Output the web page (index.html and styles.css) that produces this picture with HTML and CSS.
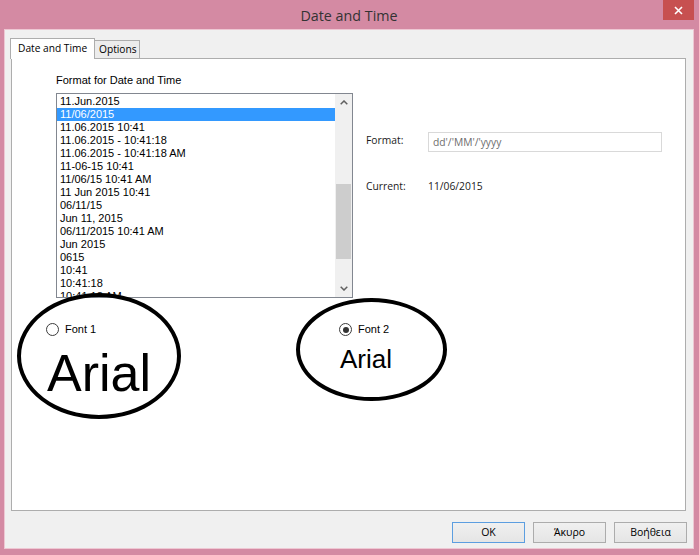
FILE: index.html
```html
<!DOCTYPE html>
<html lang="en">
<head>
<meta charset="utf-8">
<title>Date and Time</title>
<link rel="stylesheet" href="styles.css">
</head>
<body>
<div class="window">
  <div class="titlebar">
    <div class="title">Date and Time</div>
    <div class="close">
      <svg width="9" height="9" viewBox="0 0 9 9"><path d="M1 1L8 8M8 1L1 8" stroke="#fff" stroke-width="1.6" fill="none"/></svg>
    </div>
  </div>
  <div class="client">
    <div class="tabs">
      <div class="tab active">Date and Time</div>
      <div class="tab">Options</div>
    </div>
    <div class="panel">
      <div class="top">
        <div class="left">
          <div class="section-label">Format for Date and Time</div>
          <div class="listbox">
            <div class="items">
              <div class="item">11.Jun.2015</div>
              <div class="item selected">11/06/2015</div>
              <div class="item">11.06.2015 10:41</div>
              <div class="item">11.06.2015 - 10:41:18</div>
              <div class="item">11.06.2015 - 10:41:18 AM</div>
              <div class="item">11-06-15 10:41</div>
              <div class="item">11/06/15 10:41 AM</div>
              <div class="item">11 Jun 2015 10:41</div>
              <div class="item">06/11/15</div>
              <div class="item">Jun 11, 2015</div>
              <div class="item">06/11/2015 10:41 AM</div>
              <div class="item">Jun 2015</div>
              <div class="item">0615</div>
              <div class="item">10:41</div>
              <div class="item">10:41:18</div>
              <div class="item">10:41:18 AM</div>
            </div>
            <div class="scrollbar">
              <div class="sb-btn"><svg width="8" height="5" viewBox="0 0 8 5"><polyline points="0.7,4.3 4,1 7.3,4.3" fill="none" stroke="#606060" stroke-width="1.5"/></svg></div>
              <div class="sb-track"><div class="sb-thumb"></div></div>
              <div class="sb-btn"><svg width="8" height="5" viewBox="0 0 8 5"><polyline points="0.7,0.7 4,4 7.3,0.7" fill="none" stroke="#606060" stroke-width="1.5"/></svg></div>
            </div>
          </div>
        </div>
        <div class="details">
          <div class="field">
            <span class="flabel">Format:</span>
            <div class="input">dd'/'MM'/'yyyy</div>
          </div>
          <div class="field current">
            <span class="flabel">Current:</span>
            <span class="value">11/06/2015</span>
          </div>
        </div>
      </div>
      <div class="fonts">
        <div class="font-group g1">
          <div class="radio-row"><span class="radio"></span><span>Font 1</span></div>
          <div class="sample big">Arial</div>
        </div>
        <div class="font-group g2">
          <div class="radio-row"><span class="radio checked"></span><span>Font 2</span></div>
          <div class="sample small">Arial</div>
        </div>
      </div>
      <div class="ring ring1"></div>
      <div class="ring ring2"></div>
    </div>
    <div class="buttons">
      <button class="btn default">OK</button>
      <button class="btn">Άκυρο</button>
      <button class="btn">Βοήθεια</button>
    </div>
  </div>
</div>
</body>
</html>
```
FILE: styles.css
```css
* { box-sizing: border-box; }
html, body { margin: 0; padding: 0; }
body {
  width: 699px;
  height: 555px;
  overflow: hidden;
  background: #d48aa3;
  font-family: "Liberation Sans", Arial, sans-serif;
}
.window {
  width: 699px;
  height: 555px;
  padding: 0 5px 6px 4px;
  display: flex;
  flex-direction: column;
  background: #d48aa3;
}
.titlebar {
  height: 29px;
  flex: none;
  display: grid;
  grid-template-columns: 1fr auto 1fr;
  align-items: start;
}
.title {
  grid-column: 2;
  font-family: "Open Sans", "Noto Sans", sans-serif;
  font-size: 14.3px;
  color: #333;
  line-height: 29px;
  padding-top: 1px;
}
.close {
  grid-column: 3;
  justify-self: end;
  width: 31px;
  height: 20px;
  background: #c75050;
  display: flex;
  align-items: center;
  justify-content: center;
}
.close svg { display: block; }
.client {
  flex: 1;
  background: #f0f0f0;
  border: 1px solid #eec7d3;
  padding: 8px 7px 0 6px;
  display: flex;
  flex-direction: column;
}
.tabs {
  height: 20px;
  display: flex;
  align-items: flex-end;
  font-family: "Open Sans", "Noto Sans", sans-serif;
  font-size: 10.2px;
  color: #000;
}
.tab {
  height: 18px;
  width: 45px;
  border: 1px solid #adadad;
  border-left: none;
  border-bottom: none;
  background: #ececec;
  padding-left: 4px;
  line-height: 17px;
}
.tab.active {
  width: 85px;
  height: 21px;
  margin-left: -1px;
  margin-bottom: -1px;
  border-left: 1px solid #adadad;
  background: #fff;
  padding-left: 7px;
  line-height: 18px;
  position: relative;
  z-index: 1;
}
.panel {
  position: relative;
  width: 675px;
  height: 453px;
  flex: none;
  border: 1px solid #adadad;
  background: #fff;
  padding-top: 15px;
}
.top {
  display: flex;
  margin-left: 44px;
}
.section-label {
  font-size: 11px;
  line-height: 13px;
  color: #000;
}
.listbox {
  margin-top: 6px;
  width: 297px;
  height: 205px;
  border: 1px solid #828790;
  display: flex;
  overflow: hidden;
}
.items {
  flex: 1;
  padding-top: 1px;
  overflow: hidden;
}
.item {
  font-size: 11px;
  line-height: 13px;
  height: 13px;
  padding-left: 3px;
  color: #000;
  white-space: nowrap;
}
.item.selected {
  background: #3399ff;
  color: #fff;
}
.scrollbar {
  width: 17px;
  background: #f0f0f0;
  display: flex;
  flex-direction: column;
}
.sb-btn {
  height: 17px;
  display: flex;
  align-items: center;
  justify-content: center;
}
.sb-btn svg { display: block; }
.sb-track {
  flex: 1;
  padding-top: 73px;
}
.sb-thumb {
  height: 75px;
  margin: 0 1px;
  background: #cdcdcd;
}
.details {
  margin-left: 13px;
  padding-top: 58px;
  font-family: "Open Sans", "Noto Sans", sans-serif;
  font-size: 10.3px;
  color: #1a1a1a;
}
.field {
  display: flex;
  align-items: flex-start;
}
.flabel {
  width: 62px;
  line-height: 16px;
}
.input {
  width: 234px;
  height: 20px;
  border: 1px solid #d9d9d9;
  padding-left: 4px;
  line-height: 18px;
  color: #6d6d6d;
}
.field.current {
  margin-top: 26px;
}
.value { line-height: 16px; }
.fonts {
  display: flex;
  margin-top: 25px;
  padding-left: 34px;
}
.font-group.g1 { width: 293px; }
.radio-row {
  display: flex;
  align-items: center;
  gap: 6px;
  font-size: 11px;
  line-height: 13px;
  color: #000;
}
.radio {
  width: 13px;
  height: 13px;
  border: 1px solid #3c3c3c;
  border-radius: 50%;
  background: #fff;
  display: flex;
  align-items: center;
  justify-content: center;
}
.radio.checked::after {
  content: "";
  width: 6px;
  height: 6px;
  border-radius: 50%;
  background: #333;
}
.sample {
  font-family: "Liberation Sans", Arial, sans-serif;
  color: #000;
}
.sample.big {
  font-size: 52px;
  line-height: 52px;
  margin-top: 11px;
  margin-left: 1px;
}
.sample.small {
  font-size: 26px;
  line-height: 26px;
  margin-top: 10px;
  margin-left: 1px;
}
.ring {
  position: absolute;
  border: 4.5px solid #000;
  border-radius: 50%;
  pointer-events: none;
}
.ring1 { left: 5px; top: 234px; width: 164px; height: 126px; }
.ring2 { left: 284px; top: 239px; width: 151px; height: 103px; }
.buttons {
  margin-top: 11px;
  margin-right: -1px;
  display: flex;
  justify-content: flex-end;
  gap: 8px;
}
.btn {
  width: 73px;
  height: 21px;
  border: 1px solid #acacac;
  background: linear-gradient(#f0f0f0, #e5e5e5);
  font-family: "Open Sans", "Noto Sans", sans-serif;
  font-size: 10.5px;
  color: #000;
  padding: 0;
  line-height: 19px;
}
.btn.default {
  border-color: #5c9ee0;
}
```
